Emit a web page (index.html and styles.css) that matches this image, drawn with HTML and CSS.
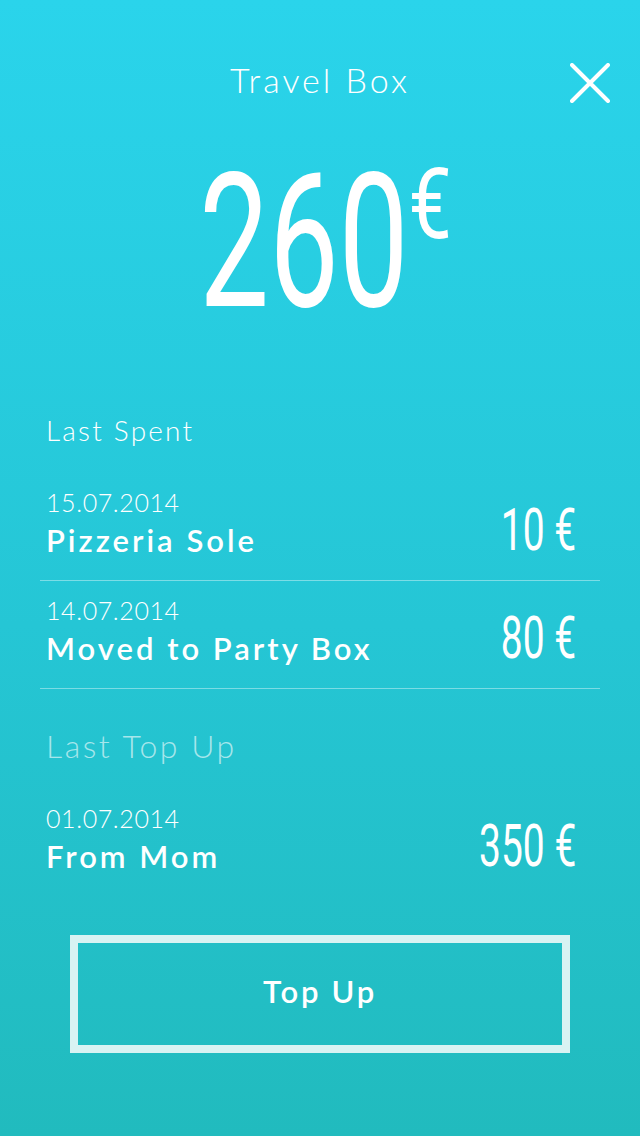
FILE: index.html
```html
<!DOCTYPE html>
<html lang="en">
<head>
<meta charset="utf-8">
<title>Travel Box</title>
<link rel="stylesheet" href="styles.css">
</head>
<body>
<div class="screen">
  <header class="header">
    <div class="header-spacer"></div>
    <h1 class="title">Travel Box</h1>
    <button class="close" aria-label="Close">
      <svg width="40" height="40" viewBox="0 0 40 40"><path d="M2 2 L38 38 M38 2 L2 38" stroke="#fff" stroke-width="4" stroke-linecap="round" fill="none"/></svg>
    </button>
  </header>

  <div class="balance"><span class="balance-inner">260<span class="balance-cur">€</span></span></div>

  <section class="list">
    <h2 class="section-title">Last Spent</h2>
    <div class="row sep">
      <div class="info">
        <div class="date">15.07.2014</div>
        <div class="name">Pizzeria Sole</div>
      </div>
      <div class="amount"><span>10 €</span></div>
    </div>
    <div class="row sep">
      <div class="info">
        <div class="date">14.07.2014</div>
        <div class="name">Moved to Party Box</div>
      </div>
      <div class="amount"><span>80 €</span></div>
    </div>

    <h2 class="section-title muted">Last Top Up</h2>
    <div class="row">
      <div class="info">
        <div class="date">01.07.2014</div>
        <div class="name">From Mom</div>
      </div>
      <div class="amount"><span>350 €</span></div>
    </div>
  </section>

  <button class="topup">Top Up</button>
</div>
</body>
</html>
```
FILE: styles.css
```css
* { box-sizing: border-box; }
html, body { margin: 0; padding: 0; }
body {
  width: 640px;
  height: 1136px;
  background: linear-gradient(180deg, #2ad4eb 0%, #25c6d5 55%, #21bbbe 100%);
  font-family: "Lato", "Open Sans", sans-serif;
  color: #fff;
  overflow: hidden;
}
.screen { display: flex; flex-direction: column; }

.header {
  display: grid;
  grid-template-columns: 1fr auto 1fr;
  padding-top: 60px;
}
.title {
  margin: 0;
  font-size: 34px;
  line-height: 40px;
  font-weight: 300;
  letter-spacing: 3px;
}
.close {
  justify-self: end;
  align-self: start;
  margin: 3px 30px 0 0;
  padding: 0;
  width: 40px;
  height: 40px;
  border: 0;
  background: none;
  display: block;
}
.close svg { display: block; }

.balance {
  margin-top: 59px;
  text-align: center;
  font-family: "Roboto", sans-serif;
  font-weight: 400;
  font-size: 188px;
  line-height: 160px;
  height: 160px;
}
.balance-inner {
  display: inline-block;
  transform: scaleX(0.66);
  transform-origin: center;
  margin-left: 5px;
}
.balance-cur {
  display: inline-block;
  font-size: 99px;
  line-height: 0;
  vertical-align: 68px;
  transform: scaleX(1.18);
  transform-origin: left;
}

.list {
  padding: 0 40px;
  margin-top: 91px;
}
.section-title {
  margin: 0 0 26px 6px;
  font-size: 28px;
  line-height: 34px;
  font-weight: 300;
  letter-spacing: 2.2px;
}
.section-title.muted {
  margin-top: 38px;
  margin-bottom: 24px;
  font-size: 32px;
  line-height: 38px;
  letter-spacing: 2.5px;
  color: rgba(255, 255, 255, 0.6);
}
.row {
  display: grid;
  grid-template-columns: 1fr auto;
  padding: 14px 24px 22px 6px;
}
.row.sep { border-bottom: 1px solid rgba(255, 255, 255, 0.4); }
.date {
  font-size: 25px;
  line-height: 30px;
  font-weight: 300;
  letter-spacing: 0.6px;
}
.name {
  margin-top: 5px;
  font-size: 31px;
  line-height: 36px;
  font-weight: 600;
  letter-spacing: 3px;
}
.amount {
  align-self: end;
  font-family: "Roboto", sans-serif;
  font-weight: 400;
  font-size: 59px;
  line-height: 56px;
  white-space: nowrap;
}
.amount span {
  display: inline-block;
  transform: scaleX(0.66);
  transform-origin: right;
}

.topup {
  margin: 39px auto 0;
  width: 500px;
  height: 118px;
  border: 8px solid #d8f3f3;
  background: transparent;
  color: #fff;
  font-family: "Lato", "Open Sans", sans-serif;
  font-size: 31px;
  font-weight: 600;
  letter-spacing: 2.7px;
  line-height: 36px;
  padding: 0 0 6px;
}
```
